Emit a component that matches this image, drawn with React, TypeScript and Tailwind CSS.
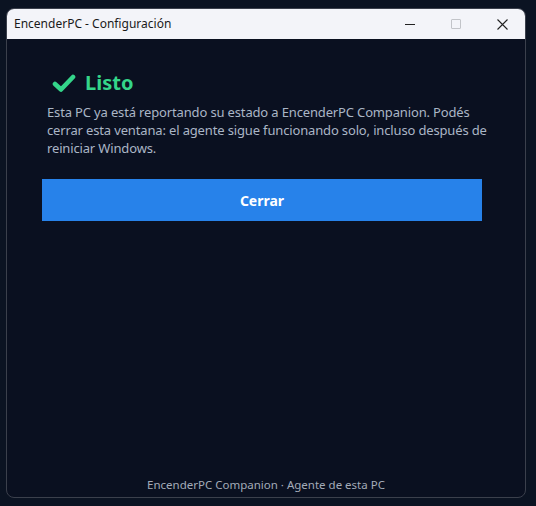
import React from "react";

export default function App() {
  return (
    <div
      className="w-[536px] h-[506px] bg-[#0b1322] flex pt-[8px] pl-[6px]"
      style={{ fontFamily: '"Noto Sans", "Open Sans", sans-serif' }}
    >
      <div className="w-[520px] h-[490px] rounded-[8px] border border-[#3b404c] overflow-hidden flex flex-col bg-[#0a1020]">
        <div className="h-[30px] bg-[#f3f4f9] flex items-center shrink-0">
          <div className="pl-[7px] text-[12px] text-[#1a1a1a] flex-1">EncenderPC - Configuración</div>
          <div className="flex items-center h-full">
            <div className="w-[46px] h-full flex items-center justify-center">
              <div className="w-[10px] h-[1px] bg-[#222]" />
            </div>
            <div className="w-[46px] h-full flex items-center justify-center">
              <div className="w-[10px] h-[10px] border border-[#c2c4c9] rounded-[1px]" />
            </div>
            <div className="w-[46px] h-full flex items-center justify-center">
              <svg width="11" height="11" viewBox="0 0 11 11">
                <path d="M0.5 0.5 L10.5 10.5 M10.5 0.5 L0.5 10.5" stroke="#222" strokeWidth="1.1" />
              </svg>
            </div>
          </div>
        </div>
        <div className="flex-1 flex flex-col">
          <div className="flex flex-col pl-[35px]">
            <div className="flex items-center mt-[33px] ml-[10px] gap-[9px] h-[22px]">
              <svg width="24" height="20" viewBox="0 0 24 20">
                <path d="M3 11 L9 16.5 L21 4" fill="none" stroke="#34d58a" strokeWidth="4.6" strokeLinecap="round" strokeLinejoin="round" />
              </svg>
              <span className="text-[20px] font-bold text-[#34d58a] leading-none">Listo</span>
            </div>
            <p className="mt-[9px] ml-[5px] w-[470px] tracking-[-0.15px] text-[13px] leading-[18px] text-[#aab6c6]">
              Esta PC ya está reportando su estado a EncenderPC Companion. Podés
              <br />
              cerrar esta ventana: el agente sigue funcionando solo, incluso después de
              <br />
              reiniciar Windows.
            </p>
            <button className="mt-[22px] h-[42px] w-[440px] bg-[#2782ea] text-white font-bold text-[14px] flex items-center justify-center">
              Cerrar
            </button>
          </div>
          <div className="flex-1" />
          <div className="text-center text-[11.5px] text-[#a3abb8] mb-[4px]">
            EncenderPC Companion · Agente de esta PC
          </div>
        </div>
      </div>
    </div>
  );
}
